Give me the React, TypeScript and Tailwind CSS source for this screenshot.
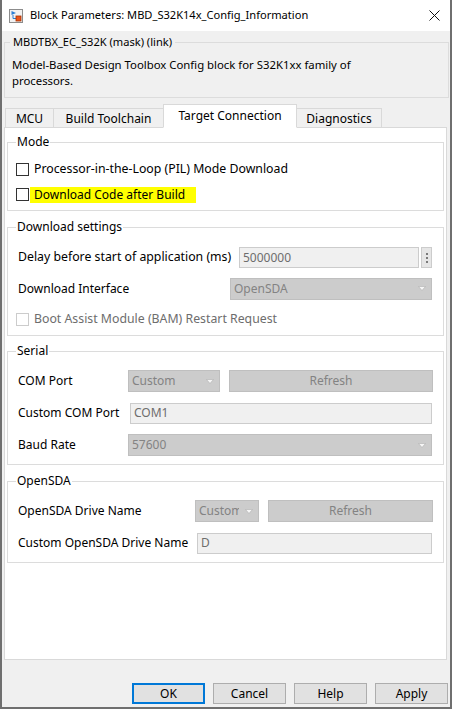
import React from "react";

const UI = "font-['Noto_Sans',sans-serif] text-[12px] text-black";

function Group({ title, className, children }: { title: string; className: string; children: React.ReactNode }) {
  return (
    <fieldset className={"border border-[#dcdcdc] pl-[8px] min-w-0 " + className}>
      <legend className="px-[1px] h-[16px] leading-[16px]">{title}</legend>
      {children}
    </fieldset>
  );
}

function Check({ disabled }: { disabled?: boolean }) {
  return (
    <span
      className={
        "w-[13px] h-[13px] border bg-white shrink-0 " +
        (disabled ? "border-[#cccccc]" : "border-[#333333]")
      }
    />
  );
}

function Arrow() {
  return (
    <svg width="8" height="5" viewBox="0 0 8 5" className="shrink-0">
      <polygon points="0.5,0.5 7.5,0.5 4,4.5" fill="#f6f6f6" stroke="#b0b0b0" strokeWidth="0.6" />
    </svg>
  );
}

function Combo({ value, className }: { value: string; className: string }) {
  return (
    <div
      className={
        "h-[22px] bg-[#cccccc] border border-[#bfbfbf] flex items-center pl-[3px] pr-[5px] text-[#838383] " +
        className
      }
    >
      <span className="flex-1 overflow-hidden whitespace-nowrap mr-[6px]">{value}</span>
      <Arrow />
    </div>
  );
}

function Field({ value, className }: { value: string; className: string }) {
  return (
    <div
      className={
        "h-[21px] bg-[#f0f0f0] border border-[#cccccc] pl-[3px] flex items-center text-[#6d6d6d] " + className
      }
    >
      {value}
    </div>
  );
}

function Refresh() {
  return (
    <div className="h-[22px] flex-1 bg-[#cccccc] border border-[#bfbfbf] flex items-center justify-center text-[#838383]">
      Refresh
    </div>
  );
}

function Tab({ label, w, active }: { label: string; w: string; active?: boolean }) {
  return (
    <div
      className={
        "border border-[#d9d9d9] -ml-px flex items-center justify-center " +
        w +
        (active
          ? " h-[24px] bg-white border-b-white relative z-10 pb-[1px]"
          : " h-[20px] bg-[#f0f0f0] border-b-0")
      }
    >
      {label}
    </div>
  );
}

function Button({ label, primary }: { label: string; primary?: boolean }) {
  return (
    <div
      className={
        "w-[73px] h-[21px] bg-[#e1e1e1] flex items-center justify-center " +
        (primary ? "border-2 border-[#0078d7]" : "border border-[#adadad]")
      }
    >
      {label}
    </div>
  );
}

export default function App() {
  return (
    <div
      className={
        UI +
        " w-[452px] h-[709px] flex flex-col bg-[#f0f0f0] border-l-2 border-r-2 border-b-2 border-[#6f6f6f] overflow-hidden"
      }
    >
      {/* title bar */}
      <div className="h-[31px] bg-white flex items-center shrink-0">
        <svg width="14" height="14" viewBox="0 0 14 14" className="ml-[7px]">
          <rect x="0.5" y="0.5" width="13" height="13" fill="#f2f2f2" stroke="#8c8c8c" />
          <path d="M2.5 2 L7 4 L2.5 6 Z" fill="#2b7fd6" />
          <path d="M4 6 V9.5 H7" stroke="#2b7fd6" fill="none" strokeWidth="1" />
          <rect x="7" y="7" width="5" height="5" fill="#e8561e" stroke="#a63000" strokeWidth="0.8" />
        </svg>
        <span className="ml-[7px] text-[11.1px]">Block Parameters: MBD_S32K14x_Config_Information</span>
        <svg width="11" height="11" viewBox="0 0 11 11" className="ml-auto mr-[10px] mb-[1px]">
          <path d="M0.5 0.5 L10.5 10.5 M10.5 0.5 L0.5 10.5" stroke="#111" strokeWidth="1" />
        </svg>
      </div>

      {/* mask description */}
      <fieldset className="mt-[3px] ml-[2px] mr-[1px] h-[64px] border border-[#dcdcdc] pl-[5px] shrink-0 min-w-0">
        <legend className="px-[3px] h-[16px] leading-[16px] text-[11.1px]">MBDTBX_EC_S32K (mask) (link)</legend>
        <div className="pt-[7px] pl-[2px] leading-[16px] text-[11.35px]">
          Model-Based Design Toolbox Config block for S32K1xx family of
          <br />
          processors.
        </div>
      </fieldset>

      {/* tabs */}
      <div className="mt-[7px] h-[23px] flex items-end pl-[2px] ml-[2px] shrink-0 -mb-px">
        <Tab label="MCU" w="w-[49px]" />
        <Tab label="Build Toolchain" w="w-[111px]" />
        <Tab label="Target Connection" w="w-[134px]" active />
        <Tab label="Diagnostics" w="w-[86px]" />
      </div>

      {/* pane */}
      <div className="flex-1 ml-[2px] mr-[3px] bg-white border border-[#d9d9d9] px-[2px] min-h-0">
        <Group title="Mode" className="mt-[6px] pb-[3px]">
          <div className="pt-[7px]">
            <div className="h-[25px] flex items-center">
              <Check />
              <span className="ml-[5px] text-[12.3px]">Processor-in-the-Loop (PIL) Mode Download</span>
            </div>
            <div className="h-[25px] flex items-center">
              <Check />
              <span className="ml-[1px] pl-[4px] pr-[11px] h-[16px] leading-[16px] bg-[#ffff00]">
                Download Code after Build
              </span>
            </div>
          </div>
        </Group>

        <Group title="Download settings" className="mt-[8px] pr-[11px]">
          <div className="pt-[7px]">
            <div className="h-[31px] flex items-center">
              <span className="w-[223px] pl-[2px] shrink-0 text-[12.3px]">Delay before start of application (ms)</span>
              <Field value="5000000" className="flex-1" />
              <div className="ml-[2px] w-[11px] h-[21px] bg-[#e6e6e6] border border-[#cccccc] flex flex-col items-center justify-center gap-[2px]">
                <span className="w-[2px] h-[2px] bg-[#7a7a7a]" />
                <span className="w-[2px] h-[2px] bg-[#7a7a7a]" />
                <span className="w-[2px] h-[2px] bg-[#7a7a7a]" />
              </div>
            </div>
            <div className="h-[31px] flex items-center">
              <span className="w-[214px] pl-[2px] shrink-0">Download Interface</span>
              <Combo value="OpenSDA" className="flex-1" />
            </div>
            <div className="h-[31px] flex items-center">
              <Check disabled />
              <span className="ml-[5px] text-[#6d6d6d] text-[12.3px]">Boot Assist Module (BAM) Restart Request</span>
            </div>
          </div>
        </Group>

        <Group title="Serial" className="mt-[7px] pr-[10px] pb-[3px]">
          <div className="pt-[6px]">
            <div className="h-[32px] flex items-center">
              <span className="w-[112px] pl-[2px] shrink-0">COM Port</span>
              <Combo value="Custom" className="w-[92px]" />
              <span className="w-[9px]" />
              <Refresh />
            </div>
            <div className="h-[32px] flex items-center pr-[1px]">
              <span className="w-[114px] pl-[2px] shrink-0">Custom COM Port</span>
              <Field value="COM1" className="flex-1" />
            </div>
            <div className="h-[32px] flex items-center pr-[1px]">
              <span className="w-[112px] pl-[2px] shrink-0">Baud Rate</span>
              <Combo value="57600" className="flex-1" />
            </div>
          </div>
        </Group>

        <Group title="OpenSDA" className="mt-[8px] pr-[10px] pb-[3px]">
          <div className="pt-[6px]">
            <div className="h-[32px] flex items-center">
              <span className="w-[179px] pl-[2px] shrink-0">OpenSDA Drive Name</span>
              <Combo value="Custom" className="w-[64px]" />
              <span className="w-[9px]" />
              <Refresh />
            </div>
            <div className="h-[32px] flex items-center pr-[1px]">
              <span className="w-[181px] pl-[2px] shrink-0">Custom OpenSDA Drive Name</span>
              <Field value="D" className="flex-1" />
            </div>
          </div>
        </Group>
      </div>

      {/* buttons */}
      <div className="h-[47px] shrink-0 flex items-start justify-end gap-[8px] pt-[23px] pr-[2px]">
        <Button label="OK" primary />
        <Button label="Cancel" />
        <Button label="Help" />
        <Button label="Apply" />
      </div>
    </div>
  );
}
